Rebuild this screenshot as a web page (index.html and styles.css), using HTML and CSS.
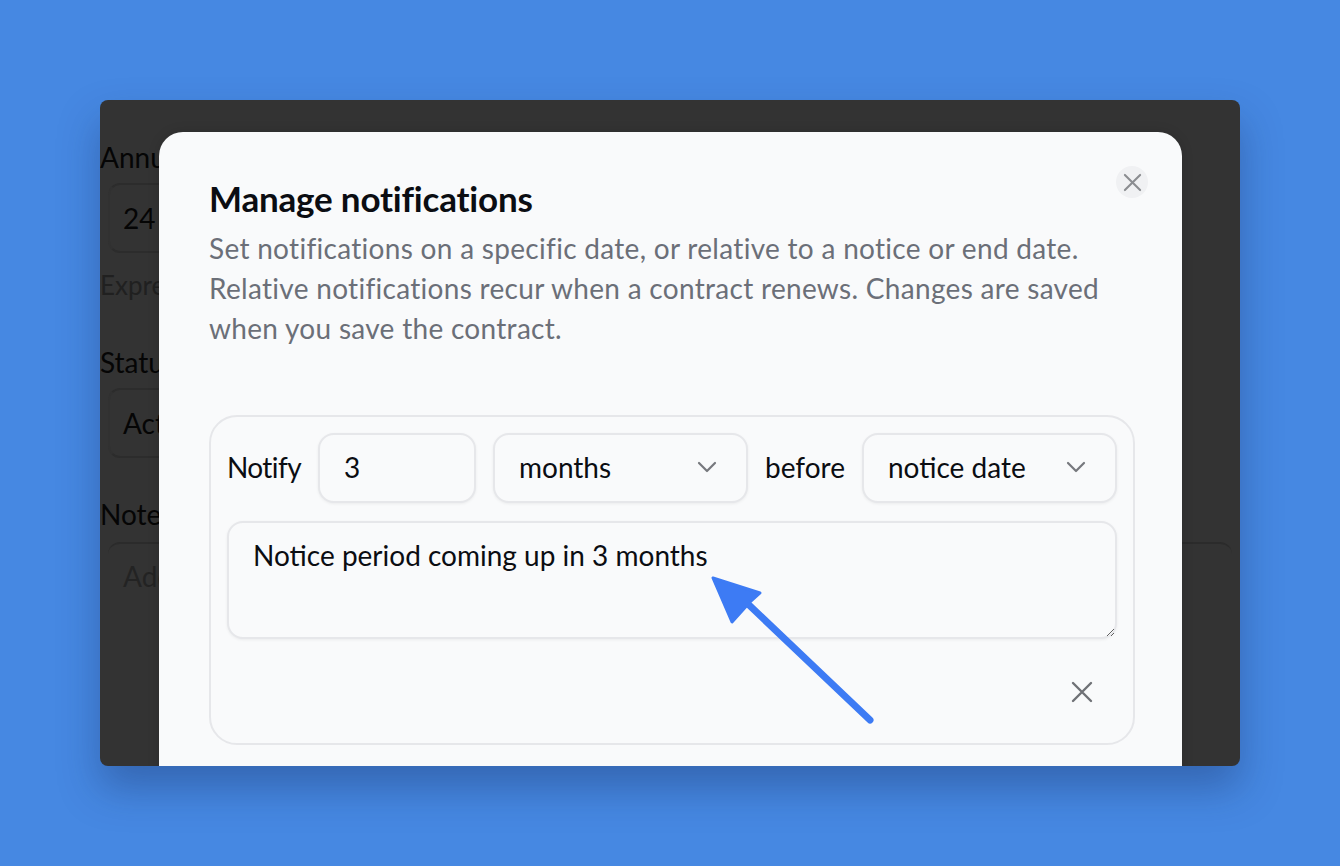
FILE: index.html
```html
<!DOCTYPE html>
<html lang="en">
<head>
<meta charset="utf-8">
<title>Manage notifications</title>
<link rel="stylesheet" href="styles.css">
</head>
<body>
<div class="stage">
  <div class="window">
    <div class="bgform">
      <div class="bg-label">Annual</div>
      <div class="bg-input bg-input-half">24</div>
      <div class="bg-help">Express</div>
      <div class="bg-label bg-label-gap">Status</div>
      <div class="bg-input bg-input-half">Active</div>
      <div class="bg-label bg-label-gap2">Notes</div>
      <div class="bg-textarea">Add a note</div>
    </div>

    <div class="modal">
      <button class="modal-close" type="button" aria-label="Close">
        <svg viewBox="0 0 20 20" width="20" height="20"><path d="M2 2 L18 18 M18 2 L2 18" stroke="#8b8d91" stroke-width="2.2" stroke-linecap="round" fill="none"/></svg>
      </button>
      <h1 class="modal-title">Manage notifications</h1>
      <p class="modal-desc">Set notifications on a specific date, or relative to a notice or end date.<br>Relative notifications recur when a contract renews. Changes are saved<br>when you save the contract.</p>

      <div class="card">
        <div class="card-row">
          <span class="word word-notify">Notify</span>
          <input class="field field-num" type="text" value="3">
          <div class="field field-select">
            <span>months</span>
            <svg class="chev" viewBox="0 0 20 12" width="20" height="12"><path d="M2 2 L10 10 L18 2" stroke="#76787d" stroke-width="2.2" stroke-linecap="round" stroke-linejoin="round" fill="none"/></svg>
          </div>
          <span class="word">before</span>
          <div class="field field-select">
            <span>notice date</span>
            <svg class="chev" viewBox="0 0 20 12" width="20" height="12"><path d="M2 2 L10 10 L18 2" stroke="#76787d" stroke-width="2.2" stroke-linecap="round" stroke-linejoin="round" fill="none"/></svg>
          </div>
        </div>
        <textarea class="message">Notice period coming up in 3 months</textarea>
        <div class="card-foot">
          <button class="remove" type="button" aria-label="Remove notification">
            <svg viewBox="0 0 22 22" width="22" height="22"><path d="M2 2 L20 20 M20 2 L2 20" stroke="#6f7176" stroke-width="2.4" stroke-linecap="round" fill="none"/></svg>
          </button>
        </div>
      </div>
    </div>
  </div>
</div>

<svg class="arrow" viewBox="0 0 1340 866" width="1340" height="866">
  <line x1="748" y1="604" x2="870" y2="720" stroke="#3d7bf4" stroke-width="7" stroke-linecap="round"/>
  <polygon points="713,578 760,593 750,602 732,622" fill="#3d7bf4" stroke="#3d7bf4" stroke-width="3" stroke-linejoin="round"/>
</svg>
</body>
</html>
```

FILE: styles.css
```css
* { box-sizing: border-box; }

html, body {
  margin: 0;
  padding: 0;
}

body {
  width: 1340px;
  height: 866px;
  overflow: hidden;
  background: #4688e2;
  font-family: "Lato", "Open Sans", "Liberation Sans", sans-serif;
  position: relative;
}

.stage {
  padding: 100px 100px 0 100px;
}

.window {
  position: relative;
  width: 1140px;
  height: 666px;
  background: #333333;
  border-radius: 8px;
  overflow: hidden;
  box-shadow: 0 22px 40px rgba(20, 40, 90, 0.35);
}

/* dimmed form behind the dialog */
.bgform {
  padding-top: 37px;
  color: #050505;
}

.bg-label {
  font-size: 28px;
  line-height: 40px;
  white-space: nowrap;
}

.bg-label-gap { margin-top: 39px; }
.bg-label-gap2 { margin-top: 36px; }

.bg-input {
  margin: 6px 0 0 8px;
  height: 70px;
  border: 2px solid #313131;
  border-top-color: #2c2c2c;
  border-bottom-color: #2c2c2c;
  border-radius: 12px;
  padding-left: 13px;
  font-size: 28px;
  line-height: 66px;
  white-space: nowrap;
}

.bg-input-half { width: 560px; }

.bg-help {
  margin-top: 14px;
  font-size: 26px;
  line-height: 36px;
  color: #202020;
  white-space: nowrap;
}

.bg-textarea {
  margin: 8px 0 0 8px;
  width: 1124px;
  height: 320px;
  border-top: 2px solid #2b2b2b;
  border-radius: 12px;
  padding: 12px 15px;
  font-size: 28px;
  line-height: 40px;
  color: #232323;
  white-space: nowrap;
}

/* dialog */
.modal {
  position: absolute;
  left: 59px;
  top: 32px;
  width: 1023px;
  height: 720px;
  background: #f9fafb;
  border-radius: 24px;
  padding: 44px 47px 0 50px;
  box-shadow: 0 0 12px rgba(0, 0, 0, 0.15);
}

.modal-close {
  position: absolute;
  top: 34px;
  right: 34px;
  width: 32px;
  height: 32px;
  border: none;
  border-radius: 50%;
  background: #f0f1f3;
  display: flex;
  align-items: center;
  justify-content: center;
  padding: 0;
}

.modal-close svg { width: 19px; height: 19px; }

.modal-title {
  margin: 0;
  font-size: 35px;
  line-height: 44px;
  font-weight: 700;
  color: #0b0d12;
  letter-spacing: -0.2px;
}

.modal-desc {
  margin: 8px 0 0 0;
  font-size: 28px;
  line-height: 40px;
  letter-spacing: 0.3px;
  color: #6b6f78;
  white-space: nowrap;
}

.card {
  margin-top: 67px;
  border: 2px solid #e6e7ea;
  border-radius: 28px;
  padding: 16px;
  background: #f9fafb;
}

.card-row {
  display: flex;
  align-items: center;
  gap: 17px;
}

.word {
  font-size: 28px;
  line-height: 36px;
  margin-top: -3px;
  color: #0b0d12;
  white-space: nowrap;
}

.word-notify {
  letter-spacing: -0.6px;
}

.field {
  height: 70px;
  border: 2px solid #e6e7ea;
  border-radius: 16px;
  background: #f9fafb;
  box-shadow: 0 1px 3px rgba(0, 0, 0, 0.06);
  font-family: inherit;
  font-size: 28px;
  color: #0b0d12;
  padding: 0 24px;
}

.field-num {
  width: 158px;
  flex: none;
  outline: none;
  padding-bottom: 3px;
}

.field-select {
  flex: 1;
  display: flex;
  align-items: center;
  justify-content: space-between;
  padding-right: 29px;
  padding-bottom: 3px;
}

.chev { width: 20px; height: 12px; }

.message {
  display: block;
  width: 100%;
  height: 118px;
  margin-top: 18px;
  border: 2px solid #e6e7ea;
  border-radius: 16px;
  background: #f9fafb;
  box-shadow: 0 1px 3px rgba(0, 0, 0, 0.06);
  padding: 12px 24px;
  font-family: inherit;
  font-size: 28px;
  line-height: 40px;
  color: #0b0d12;
  resize: vertical;
  outline: none;
}

.card-foot {
  display: flex;
  justify-content: flex-end;
  margin-top: 18px;
}

.remove {
  width: 70px;
  height: 70px;
  border: none;
  background: transparent;
  padding: 0;
  display: flex;
  align-items: center;
  justify-content: center;
}

.arrow {
  position: absolute;
  left: 0;
  top: 0;
  pointer-events: none;
}
```
